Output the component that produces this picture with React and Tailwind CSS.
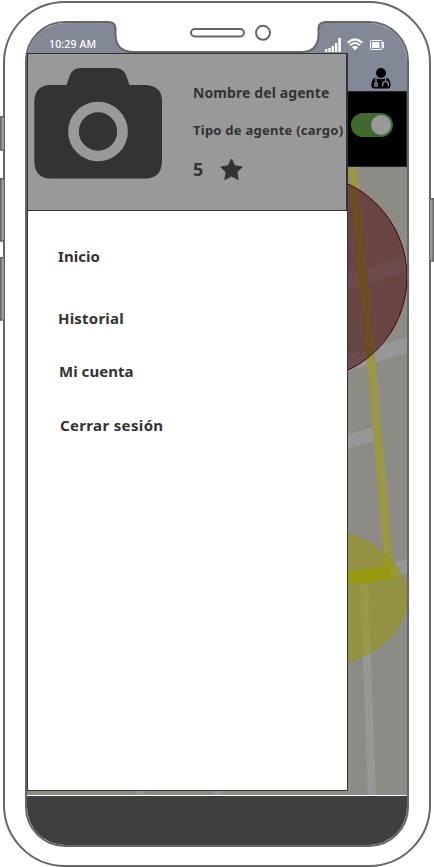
import React from "react";

const menu = [
  { label: "Inicio", cls: "top-[34px] left-[30px] tracking-[0.05px]" },
  { label: "Historial", cls: "top-[96px] left-[30px] tracking-[0.2px]" },
  { label: "Mi cuenta", cls: "top-[149px] left-[31px] tracking-[0.03px]" },
  { label: "Cerrar sesión", cls: "top-[203px] left-[32px] tracking-[0.35px]" },
];

function MapView() {
  return (
    <svg className="block h-[628px] w-[380px] bg-[#8c8b85]" viewBox="27 167 380 628">
      <g stroke="#979797" fill="none">
        <path d="M340 284L410 263M340 366L410 344" strokeWidth="15" />
        <path d="M340 444L374 434" strokeWidth="14" />
        <path d="M390 570L410 566" strokeWidth="14" />
        <path d="M364 583L367 660L372 797" strokeWidth="8" />
        <path d="M141 780V797M218 780V797" strokeWidth="8" />
      </g>
      <path d="M352 160L370 345L390 577" stroke="#9a9843" strokeWidth="8.500" fill="none" />
      <path d="M340 579L393 572" stroke="#9a9843" strokeWidth="13" />
      <path d="M345 578L390 572" stroke="#979700" strokeOpacity=".5" strokeWidth="12" />
      <circle cx="304" cy="277" r="103" fill="#400000" fillOpacity=".5" stroke="#500000" />
      <ellipse cx="307" cy="597.500" rx="100" ry="70" fill="#999900" fillOpacity=".5" stroke="#999900" />
    </svg>
  );
}

function Doctor() {
  return (
    <svg className="h-[21px] w-[20px]" viewBox="0 0 20 21">
      <circle cx="10" cy="5" r="5" />
      <path d="M4.600 9.700Q10 12.600 15.400 9.700Q19.600 10.700 19.600 17.500Q19.600 20.600 16 20.600H4Q.4 20.600 .4 17.500Q.4 10.700 4.600 9.700Z" />
      <g stroke="#838896" fill="none" strokeWidth="1.400">
        <path d="M5 10V15" />
        <circle cx="5" cy="16.700" r="1.500" />
        <path d="M14.600 10V13.500M11.700 18.500V16.300Q11.700 13.600 14.600 13.600Q17.400 13.600 17.400 16.300V18.500" />
      </g>
    </svg>
  );
}

function StatusIcons() {
  return (
    <svg className="absolute left-[297px] top-[14px] h-[17px] w-[62px]" viewBox="324 37 62 17">
      <path fill="#fff" d="M325 49h2.400v3h-2.400zM328.300 48h2.400v4h-2.400zM331.600 46h2.400v6h-2.400zM334.900 43h2.400v9h-2.400zM338.300 38h2.600v14h-2.600z" />
      <g fill="none" stroke="#fff" strokeWidth="2">
        <path d="M347.700 42.700Q355 36 362.300 42.700M350 45.300Q355 40.800 360 45.300" />
      </g>
      <path fill="#fff" d="M351.900 47.200Q355 44.600 358.100 47.200L355 50.300Z" />
      <rect x="370.500" y="40.500" width="11.500" height="9" rx="1" fill="none" stroke="#fff" />
      <path fill="#fff" d="M372 42h7.500v6H372zM382.500 42H384v6h-1.500z" />
    </svg>
  );
}

function Drawer() {
  return (
    <aside className="absolute left-0 top-[30px] flex h-[738px] w-[321px] flex-col border border-[#333] bg-white text-[#333]">
      <header className="flex h-[157px] w-[319px] shrink-0 border-b border-r border-[#333] bg-[#999]">
        <svg className="ml-[6px] mt-[14px] h-[111px] w-[128px] shrink-0" viewBox="34 68 128 111">
          <path fill="#333" d="M49 85H66.500L70 75Q73 68 80 68H115Q123 68 126 75L129.500 85H146Q162 86 162 101V162Q161 178 146 178.500H50Q35 178 34.300 162V101Q35 86 49 85Z" />
          <circle cx="98" cy="131.500" r="24.500" fill="none" stroke="#999" strokeWidth="10.700" />
        </svg>
        <div className="ml-[31px] mt-[28px] flex flex-col whitespace-nowrap font-bold">
          <span className="text-[14px] leading-[22px] tracking-[0.1px]">Nombre del agente</span>
          <span className="mt-[16px] text-[13px] leading-[20px] tracking-[0.25px]">Tipo de agente (cargo)</span>
          <span className="mt-[17px] flex items-center text-[18px] leading-[24px]">
            5
            <svg className="ml-[17px] h-[23px] w-[23px]" viewBox="0 0 23 23"><path fill="#333" stroke="#333" strokeLinejoin="round" d="M11.500 1L14.800 7.800L22.200 8.900L16.900 14.200L18.200 21.600L11.500 18.100L4.800 21.600L6.100 14.200L.8 8.900L8.200 7.800Z" /></svg>
          </span>
        </div>
      </header>
      <nav className="relative flex-1 text-[15px] font-bold leading-[22px]">
        {menu.map((m) => <a key={m.label} className={"absolute whitespace-nowrap " + m.cls}>{m.label}</a>)}
      </nav>
    </aside>
  );
}

export default function App() {
  return (
    <div className="relative h-[867px] w-[434px] overflow-hidden bg-white pl-[3px] pt-px font-['Noto_Sans',sans-serif]">
      <div className="h-[866px] w-[428px] rounded-[62px] border-2 border-[#666] pl-[20px] pt-[18px]">
        <div className="relative h-[826px] w-[384px] rounded-[40px] border-2 border-[#666]">
          <div className="flex h-full flex-col overflow-hidden rounded-[38px]">
            <div className="flex h-[68px] shrink-0 justify-end bg-[#838896] pr-[16px] pt-[45px]"><Doctor /></div>
            <div className="flex h-[76px] shrink-0 justify-end border border-[#222] bg-black pr-[13px] pt-[21px]">
              <div className="flex h-[24px] w-[42px] items-center justify-end rounded-full bg-[#41692f] pr-[2px]">
                <div className="h-[20px] w-[20px] rounded-full bg-[#999]" />
              </div>
            </div>
            <MapView />
            <div className="flex-1 border-t border-white bg-[#3f3f3f]" />
          </div>
          <svg className="absolute left-[76px] top-[-2px] h-[34px] w-[230px]" viewBox="103 21 230 34">
            <path fill="#fff" d="M109 20V22Q115 22 115.500 28V35Q116 51 132 52H303Q318 51 318.500 35V28Q319 22 325 22V20Z" />
            <path fill="none" stroke="#666" strokeWidth="2" d="M108 22Q115 22 115.500 28V35Q116 51 132 52H303Q318 51 318.500 35V28Q319 22 326 22" />
          </svg>
          <span className="absolute left-[22px] top-[14px] text-[10.500px] font-medium leading-[14px] tracking-[0.15px] text-white">10:29 AM</span>
          <StatusIcons />
          <Drawer />
        </div>
      </div>
      <svg className="absolute left-0 top-0 h-[867px] w-[434px]" viewBox="0 0 434 867">
        <g fill="#999" stroke="#666" strokeWidth="1.500">
          <path d="M4 116.700H.7V150H4M4 178.700H.7V241H4M4 257.700H.7V320H4M430 198.700H433.300V261H430" />
        </g>
        <rect x="191" y="29" width="53" height="7.500" rx="3.750" fill="#fff" stroke="#666" strokeWidth="2" />
        <circle cx="263" cy="32.800" r="7" fill="#fff" stroke="#666" strokeWidth="2" />
      </svg>
    </div>
  );
}
